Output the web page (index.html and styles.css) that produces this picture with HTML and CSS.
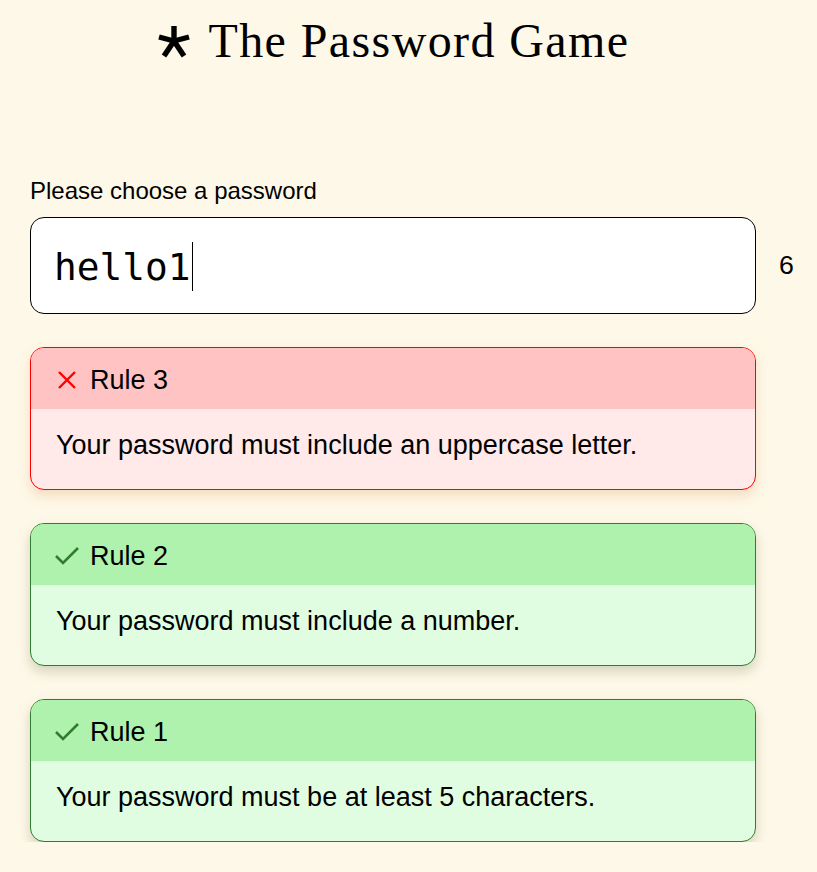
FILE: index.html
```html
<!DOCTYPE html>
<html lang="en">
<head>
<meta charset="utf-8">
<title>The Password Game</title>
<link rel="stylesheet" href="styles.css">
</head>
<body>
<main class="page">
  <h1 class="title">
    <svg class="star" viewBox="0 0 32 32" width="32" height="32" aria-hidden="true">
      <g stroke="#000" stroke-width="5.4" stroke-linecap="butt">
        <line x1="16" y1="15" x2="16" y2="0"/>
        <line x1="16" y1="15" x2="31" y2="11"/>
        <line x1="16" y1="15" x2="1" y2="11"/>
        <line x1="16" y1="15" x2="26" y2="30"/>
        <line x1="16" y1="15" x2="6" y2="30"/>
      </g>
    </svg>
    <span>The Password Game</span>
  </h1>

  <section class="password">
    <label class="label">Please choose a password</label>
    <div class="row">
      <div class="input"><span class="value">hello1</span><span class="caret"></span></div>
      <div class="count">6</div>
    </div>
  </section>

  <section class="rules">
    <div class="rule rule-error">
      <div class="rule-top">
        <svg class="icon" viewBox="0 0 20 20" width="20" height="20" aria-hidden="true">
          <path d="M2 2 L18 18 M18 2 L2 18" stroke="#ff0000" stroke-width="2.4" fill="none"/>
        </svg>
        <span>Rule 3</span>
      </div>
      <div class="rule-desc">Your password must include an uppercase letter.</div>
    </div>

    <div class="rule rule-ok">
      <div class="rule-top">
        <svg class="icon" viewBox="0 0 24 20" width="24" height="20" aria-hidden="true">
          <path d="M1 10 L8 17 L23 2" stroke="#2e7d32" stroke-width="2.6" fill="none"/>
        </svg>
        <span>Rule 2</span>
      </div>
      <div class="rule-desc">Your password must include a number.</div>
    </div>

    <div class="rule rule-ok">
      <div class="rule-top">
        <svg class="icon" viewBox="0 0 24 20" width="24" height="20" aria-hidden="true">
          <path d="M1 10 L8 17 L23 2" stroke="#2e7d32" stroke-width="2.6" fill="none"/>
        </svg>
        <span>Rule 1</span>
      </div>
      <div class="rule-desc">Your password must be at least 5 characters.</div>
    </div>
  </section>
</main>
</body>
</html>
```

FILE: styles.css
```css
html, body {
  margin: 0;
  padding: 0;
}

body {
  background: #fef8e8;
  color: #000;
  font-family: "Liberation Sans", Arial, sans-serif;
}

.page {
  width: 726px;
  padding: 0 30px;
}

.title {
  margin: 0;
  padding-top: 17px;
  height: 50px;
  display: flex;
  justify-content: center;
  align-items: flex-start;
  gap: 18px;
  font-family: "Liberation Serif", "Times New Roman", serif;
  font-weight: normal;
  font-size: 48px;
  letter-spacing: 1.4px;
  line-height: 48px;
}

.star {
  margin-top: 9px;
  margin-left: 2px;
  flex: none;
}

.password {
  margin-top: 110px;
}

.label {
  display: block;
  font-size: 24px;
  line-height: 28px;
}

.row {
  margin-top: 12px;
  display: flex;
  align-items: center;
}

.input {
  box-sizing: border-box;
  width: 726px;
  height: 97px;
  flex: none;
  background: #fff;
  border: 1px solid #000;
  border-radius: 14px;
  padding: 2px 23px 0;
  display: flex;
  align-items: center;
  font-family: "DejaVu Sans Mono", monospace;
  font-size: 37.8px;
}

.value {
  line-height: 48px;
}

.caret {
  display: inline-block;
  width: 1px;
  height: 49px;
  background: #000;
  margin-left: 1px;
}

.count {
  margin-left: 23px;
  font-size: 26.7px;
}

.rules {
  margin-top: 33px;
  display: flex;
  flex-direction: column;
  gap: 33px;
}

.rule {
  border-radius: 14px;
  overflow: hidden;
  border: 1px solid;
}

.rule-top {
  box-sizing: border-box;
  height: 61px;
  padding-top: 3px;
  display: flex;
  align-items: center;
  gap: 13px;
  padding-left: 26px;
  font-size: 27px;
}

.rule-desc {
  height: 80px;
  box-sizing: border-box;
  padding: 21px 25px 0;
  font-size: 27px;
  line-height: 30px;
}

.rule-error {
  border-color: #ff0000;
  background: #ffe9e9;
  box-shadow: 0 6px 12px rgba(230, 170, 120, 0.35);
}

.rule-error .rule-top {
  background: #ffc3c3;
}

.rule-ok {
  border-color: #2e7d32;
  background: #e1fde1;
  box-shadow: 0 6px 12px rgba(120, 130, 90, 0.3);
}

.rule-ok .rule-top {
  background: #aef2ae;
}

.rule-ok .icon {
  margin-left: -2px;
  margin-right: -2px;
}
```
